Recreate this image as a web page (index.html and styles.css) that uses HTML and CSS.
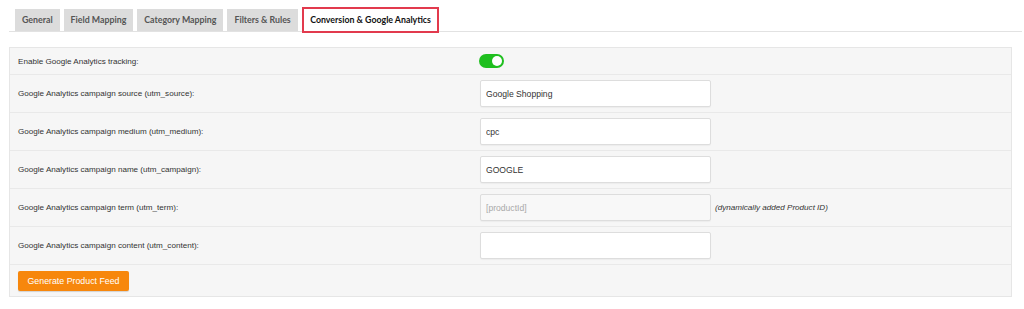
FILE: index.html
```html
<!DOCTYPE html>
<html>
<head>
<meta charset="utf-8">
<link rel="stylesheet" href="styles.css">
</head>
<body>
<div class="page">
  <nav class="tabs">
    <span class="tab">General</span>
    <span class="tab">Field Mapping</span>
    <span class="tab">Category Mapping</span>
    <span class="tab">Filters &amp; Rules</span>
    <span class="tab active">Conversion &amp; Google Analytics</span>
  </nav>
  <div class="panel">
    <div class="row r-first">
      <div class="label">Enable Google Analytics tracking:</div>
      <div class="field"><span class="toggle"><span class="knob"></span></span></div>
    </div>
    <div class="row">
      <div class="label">Google Analytics campaign source (utm_source):</div>
      <div class="field"><input class="input" type="text" value="Google Shopping"></div>
    </div>
    <div class="row">
      <div class="label">Google Analytics campaign medium (utm_medium):</div>
      <div class="field"><input class="input" type="text" value="cpc"></div>
    </div>
    <div class="row">
      <div class="label">Google Analytics campaign name (utm_campaign):</div>
      <div class="field"><input class="input" type="text" value="GOOGLE"></div>
    </div>
    <div class="row">
      <div class="label">Google Analytics campaign term (utm_term):</div>
      <div class="field"><input class="input disabled" type="text" placeholder="[productId]" readonly><em class="note">(dynamically added Product ID)</em></div>
    </div>
    <div class="row">
      <div class="label">Google Analytics campaign content (utm_content):</div>
      <div class="field"><input class="input" type="text" value=""></div>
    </div>
    <div class="row r-last">
      <button class="btn">Generate Product Feed</button>
    </div>
  </div>
</div>
</body>
</html>
```
FILE: styles.css
```css
html, body {
  margin: 0;
  padding: 0;
  background: #ffffff;
}
.page {
  padding: 8px 2px 0 9px;
  font-family: "Liberation Sans", Arial, sans-serif;
}
.tabs {
  display: flex;
  gap: 4px;
  padding-left: 6px;
  border-bottom: 1px solid #e2e2e2;
  height: 23px;
  align-items: flex-end;
}
.tab {
  box-sizing: border-box;
  height: 22px;
  line-height: 22px;
  padding: 0 7px;
  background: #dcdcdc;
  color: #555555;
  font-family: Lato, sans-serif;
  font-weight: bold;
  font-size: 8.8px;
}
.tab.active {
  height: 26px;
  line-height: 22px;
  background: #ffffff;
  color: #111111;
  border: 2px solid #e23a4d;
  padding: 0 6.5px;
  margin-bottom: -3px;
  position: relative;
  top: -1px;
}
.panel {
  margin-top: 15px;
  width: 1001px;
  background: #f6f6f6;
  border: 1px solid #e6e6e6;
}
.row {
  display: flex;
  align-items: center;
  height: 38px;
  border-top: 1px solid #e9e9e9;
  box-sizing: border-box;
  padding-left: 8px;
}
.row.r-first {
  height: 26px;
  border-top: none;
}
.row.r-last {
  height: 32px;
}
.label {
  width: 462px;
  font-size: 8.1px;
  color: #333333;
}
.field {
  display: flex;
  align-items: center;
}
.toggle {
  display: block;
  width: 25px;
  height: 14px;
  border-radius: 7px;
  background: #1fbf1f;
  position: relative;
  margin-left: -1px;
}
.knob {
  position: absolute;
  right: 2px;
  top: 2px;
  width: 10px;
  height: 10px;
  border-radius: 50%;
  background: #ffffff;
}
.input {
  box-sizing: border-box;
  width: 231px;
  height: 27px;
  margin: 0;
  border: 1px solid #dddddd;
  border-radius: 2px;
  background: #ffffff;
  padding: 0 5px;
  font-family: "Liberation Sans", Arial, sans-serif;
  font-size: 8.6px;
  color: #333333;
  box-shadow: 0 1px 1px rgba(0,0,0,0.04);
  outline: none;
}
.input.disabled {
  background: #f8f8f8;
}
.input.disabled::placeholder {
  color: #a9a9a9;
}
.note {
  margin-left: 4px;
  font-size: 8.1px;
  color: #333333;
}
.btn {
  border: none;
  background: #f7870c;
  color: #ffffff;
  font-family: "Liberation Sans", Arial, sans-serif;
  font-size: 8.8px;
  height: 20px;
  width: 111px;
  border-radius: 2px;
  padding: 0;
  box-shadow: 0 1px 1px rgba(0,0,0,0.15);
}
```
